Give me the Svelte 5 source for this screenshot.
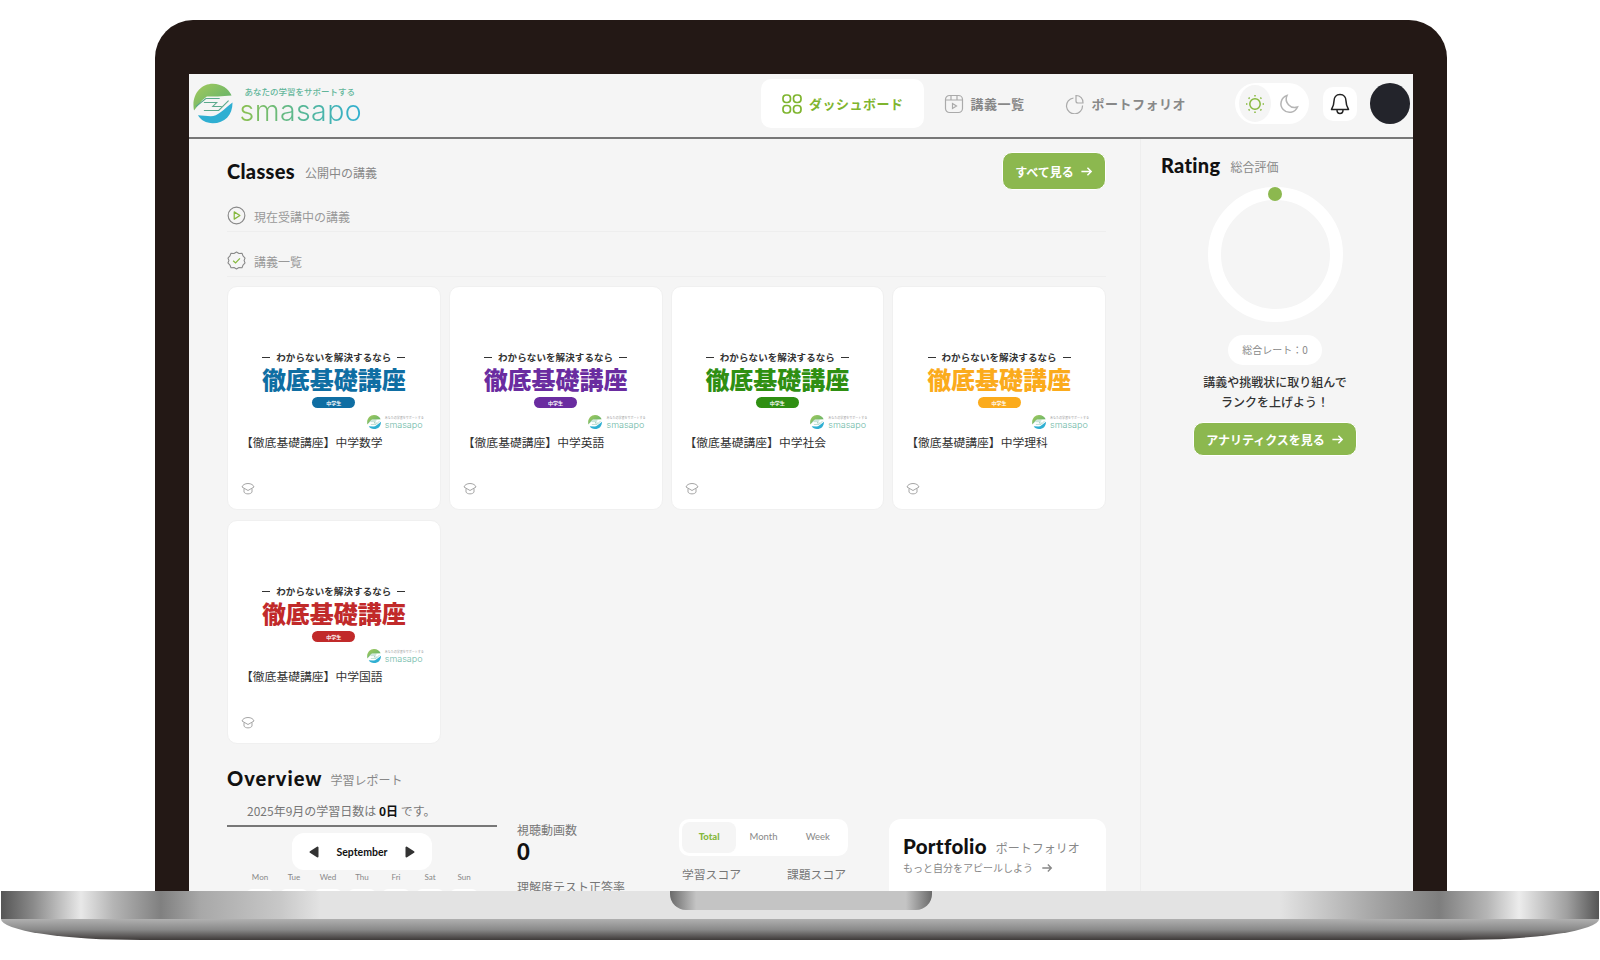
<script>
  const courses = [
    { subject: '中学数学', color: '#0f6ea3' },
    { subject: '中学英語', color: '#6a2ca0' },
    { subject: '中学社会', color: '#2f8f12' },
    { subject: '中学理科', color: '#fbab1c' },
    { subject: '中学国語', color: '#c12a2a' }
  ];
  const weekdays = ['Mon', 'Tue', 'Wed', 'Thu', 'Fri', 'Sat', 'Sun'];
</script>

{#snippet logoMark(size)}
  <svg width={size} height={size} viewBox="0 0 40 40" fill="none">
    <defs>
      <linearGradient id="leaf" x1="0" y1="0" x2="1" y2="1">
        <stop offset="0" stop-color="#a6cb5c" />
        <stop offset="1" stop-color="#55ad6e" />
      </linearGradient>
    </defs>
    <path d="M1 27C-2 11 8 0 20 0C29 0 36 5 39 12L25 13L14 13L9 17L1 27Z" fill="url(#leaf)" />
    <path d="M5 32L18 33C25 33 31 26 40 19C40 32 32 40 20 40C13 40 8 37 5 32Z" fill="#2fafd2" />
    <path d="M3 23L13 15H27M11 19H24L20 23H29M36 17L26 27H11" stroke="#5aa98c" stroke-width="1.1" />
  </svg>
{/snippet}

{#snippet arrow(size)}
  <svg width={size} height={size} viewBox="0 0 14 14" fill="none" stroke="currentColor" stroke-width="1.6">
    <path d="M1.5 7H12M8 3L12 7L8 11" />
  </svg>
{/snippet}

<div class="stage">
  <div class="bezel">
    <div class="screen">
      <header class="topbar">
        <div class="logo">
          {@render logoMark(41)}
          <div class="logo-text">
            <span class="tagline">あなたの学習をサポートする</span>
            <span class="wordmark">smasapo</span>
          </div>
        </div>

        <nav class="nav">
          <a class="nav-item active">
            <svg width="20" height="20" viewBox="0 0 20 20" fill="none" stroke="currentColor" stroke-width="1.7">
              <rect x="1" y="1" width="7.5" height="7.5" rx="3.2" />
              <rect x="11.5" y="1" width="7.5" height="7.5" rx="3.2" />
              <rect x="1" y="11.5" width="7.5" height="7.5" rx="3.2" />
              <rect x="11.5" y="11.5" width="7.5" height="7.5" rx="3.2" />
            </svg>
            ダッシュボード
          </a>
          <a class="nav-item">
            <svg width="20" height="20" viewBox="0 0 20 20" fill="none" stroke="#aaa" stroke-width="1.2">
              <rect x="1.5" y="1.5" width="17" height="17" rx="4" />
              <path d="M1.5 6H18.5M7 1.5V6M13 1.5V6" />
              <path d="M8.5 9.5L12.5 12L8.5 14.5Z" />
            </svg>
            講義一覧
          </a>
          <a class="nav-item">
            <svg width="20" height="20" viewBox="0 0 20 20" fill="none" stroke="#aaa" stroke-width="1.2">
              <path d="M8.5 4A8 8 0 1 0 17.5 11.5" />
              <path d="M11 1.5A6.8 6.8 0 0 1 18 9H13C11.8 9 11 8.2 11 7Z" />
            </svg>
            ポートフォリオ
          </a>
        </nav>

        <div class="theme-toggle">
          <span class="theme-btn on">
            <svg width="20" height="20" viewBox="0 0 20 20" fill="none" stroke="#86b83e" stroke-width="1.5">
              <circle cx="10" cy="10" r="5.2" />
              <path d="M10 1v1.4M10 17.6V19M1 10h1.4M17.6 10H19M3.6 3.6l1 1M15.4 15.4l1 1M3.6 16.4l1-1M15.4 4.6l1-1" />
            </svg>
          </span>
          <span class="theme-btn">
            <svg width="20" height="20" viewBox="0 0 20 20" fill="none" stroke="#b5b5b5" stroke-width="1.5">
              <path d="M8 1.5A8.6 8.6 0 1 0 18.5 13A8.5 8.5 0 0 1 8 1.5Z" />
            </svg>
          </span>
        </div>

        <span class="bell">
          <svg width="20" height="22" viewBox="0 0 20 22" fill="none" stroke="#222" stroke-width="1.5">
            <path d="M10 1.5C6 1.5 4 4.5 4 8C4 12 3 14 1.5 16.5H18.5C17 14 16 12 16 8C16 4.5 14 1.5 10 1.5Z" stroke-linejoin="round" />
            <path d="M7 17C7 19 8.2 20.5 10 20.5C11.8 20.5 13 19 13 17" />
          </svg>
        </span>
        <span class="avatar"></span>
      </header>

      <div class="body">
        <main class="main">
          <div class="title-row">
            <h2 class="title">Classes</h2>
            <span class="sub">公開中の講義</span>
            <button class="green-btn see-all">すべて見る {@render arrow(13)}</button>
          </div>

          <div class="section-row first">
            <svg width="19" height="19" viewBox="0 0 20 20" fill="none">
              <circle cx="10" cy="10" r="8.8" stroke="#888" stroke-width="1.2" />
              <path d="M7.6 6.2L13.6 10L7.6 13.8Z" stroke="#86b83e" stroke-width="1.3" stroke-linejoin="round" />
            </svg>
            現在受講中の講義
          </div>
          <div class="section-row">
            <svg width="19" height="19" viewBox="0 0 20 20" fill="none">
              <path d="M10 1L12.6 2.6L15.8 2.4L16.9 5.2L19 7.4L18 10L19 12.6L16.9 14.8L15.8 17.6L12.6 17.4L10 19L7.4 17.4L4.2 17.6L3.1 14.8L1 12.6L2 10L1 7.4L3.1 5.2L4.2 2.4L7.4 2.6Z" stroke="#888" stroke-width="1.1" stroke-linejoin="round" />
              <path d="M6.5 10.2L9 12.6L13.6 7.8" stroke="#86b83e" stroke-width="1.3" />
            </svg>
            講義一覧
          </div>

          <div class="cards">
            {#each courses as course}
              <article class="card">
                <div class="thumb" style="--accent: {course.color}">
                  <p class="thumb-lead"><i></i>わからないを解決するなら<i></i></p>
                  <p class="thumb-title">徹底基礎講座</p>
                  <span class="thumb-pill">中学生</span>
                  <div class="thumb-logo">
                    {@render logoMark(14)}
                    <div class="mini-text">
                      <span class="mini-tag">あなたの学習をサポートする</span>
                      <span class="mini-word">smasapo</span>
                    </div>
                  </div>
                </div>
                <p class="card-name">【徹底基礎講座】{course.subject}</p>
                <svg class="hat" width="14" height="14" viewBox="0 0 14 14" fill="none" stroke="#a5a5a5" stroke-width="1">
                  <path d="M7 1.5C10 1.5 12.5 3 13 5L7 8.5L1 5C1.5 3 4 1.5 7 1.5Z" stroke-linejoin="round" />
                  <path d="M3 6.5V10C4 12.5 10 12.5 11 10V6.5" />
                </svg>
              </article>
            {/each}
          </div>

          <div class="title-row overview-title">
            <h2 class="title wide">Overview</h2>
            <span class="sub">学習レポート</span>
          </div>

          <div class="overview">
            <section class="calendar">
              <p class="days-note">2025年9月の学習日数は <b>0日</b> です。</p>
              <div class="month-head">
                <svg width="10" height="12" viewBox="0 0 10 12"><path d="M8.5 1.5V10.5L1.5 6Z" fill="#333" stroke="#333" stroke-width="2" stroke-linejoin="round" /></svg>
                <b>September</b>
                <svg width="10" height="12" viewBox="0 0 10 12"><path d="M1.5 1.5V10.5L8.5 6Z" fill="#333" stroke="#333" stroke-width="2" stroke-linejoin="round" /></svg>
              </div>
              <div class="week">
                {#each weekdays as day}
                  <span class="day-name">{day}</span>
                {/each}
                {#each weekdays as day}
                  <span class="day-cell"></span>
                {/each}
              </div>
            </section>

            <section class="stats">
              <p class="stat-label">視聴動画数</p>
              <p class="stat-num">0</p>
              <p class="stat-label second">理解度テスト正答率</p>
            </section>

            <section class="scores">
              <div class="tabs">
                <span class="tab current">Total</span>
                <span class="tab">Month</span>
                <span class="tab">Week</span>
              </div>
              <div class="score-labels">
                <span>学習スコア</span>
                <span>課題スコア</span>
              </div>
            </section>

            <section class="portfolio">
              <div class="portfolio-title">
                <h2 class="title">Portfolio</h2>
                <span class="sub">ポートフォリオ</span>
              </div>
              <p class="portfolio-link">もっと自分をアピールしよう {@render arrow(12)}</p>
            </section>
          </div>
        </main>

        <aside class="rating">
          <div class="rating-title">
            <h2 class="title">Rating</h2>
            <span class="sub">総合評価</span>
          </div>
          <div class="ring"><span class="ring-dot"></span></div>
          <span class="rate-pill">総合レート：0</span>
          <p class="rating-copy">講義や挑戦状に取り組んで<br />ランクを上げよう！</p>
          <button class="green-btn analytics">アナリティクスを見る {@render arrow(13)}</button>
        </aside>
      </div>
    </div>
  </div>

  <div class="deck">
    <span class="notch"></span>
  </div>
  <div class="lip"></div>
</div>

<style>
  :global(body) {
    background: #fff;
  }

  .stage {
    width: 1600px;
    height: 960px;
    padding-top: 20px;
    box-sizing: border-box;
    overflow: hidden;
    font-family: "Noto Sans CJK JP", "Noto Sans", sans-serif;
    color: #777;
  }

  p,
  h2 {
    margin: 0;
  }

  .bezel {
    width: 1292px;
    height: 871px;
    margin-left: 155px;
    padding: 54px 34px 0;
    box-sizing: border-box;
    background: #231815;
    border-radius: 38px 38px 0 0;
  }

  .screen {
    height: 817px;
    background: #f5f5f5;
    overflow: hidden;
  }

  /* header */
  .topbar {
    height: 65px;
    box-sizing: border-box;
    display: flex;
    align-items: center;
    padding: 0 3px 4px 4px;
    border-bottom: 2px solid #777;
  }

  .logo {
    width: 169px;
    flex: none;
    display: flex;
    align-items: center;
    gap: 7px;
  }

  .logo-text {
    display: flex;
    flex-direction: column;
    align-items: flex-start;
    margin-top: 2px;
  }

  .tagline {
    margin-left: 5px;
    font-size: 8.5px;
    font-weight: 500;
    line-height: 11px;
    color: #62b59a;
  }

  .wordmark {
    font-family: "Inter", sans-serif;
    font-weight: 300;
    font-size: 28.5px;
    line-height: 27px;
    letter-spacing: 0.4px;
    background: linear-gradient(90deg, #8cc04f 0%, #5cb88f 45%, #2fafd2 100%);
    -webkit-background-clip: text;
    background-clip: text;
    color: transparent;
  }

  .nav {
    display: flex;
    align-items: center;
    margin-left: 399px;
  }

  .nav-item {
    height: 49px;
    display: flex;
    align-items: center;
    gap: 7px;
    padding: 0 20px;
    border-radius: 10px;
    font-size: 13px;
    font-weight: 700;
    letter-spacing: 0.5px;
    color: #888;
    white-space: nowrap;
  }

  .nav-item.active {
    padding-left: 21px;
    background: #fff;
    color: #7fb52f;
  }

  .theme-toggle {
    display: flex;
    align-items: center;
    gap: 3px;
    height: 41px;
    width: 74px;
    box-sizing: border-box;
    margin-left: 29px;
    padding: 0 4px;
    border-radius: 21px;
    background: #fff;
  }

  .theme-btn {
    width: 33px;
    height: 37px;
    display: flex;
    align-items: center;
    justify-content: center;
    border-radius: 50%;
  }

  .theme-btn.on {
    background: #f5f5f5;
  }

  .bell {
    width: 34px;
    height: 34px;
    margin-left: 14px;
    display: flex;
    align-items: center;
    justify-content: center;
    background: #fff;
    border-radius: 10px;
  }

  .avatar {
    width: 41px;
    height: 41px;
    margin-left: 13px;
    border-radius: 50%;
    background: #23242b;
  }

  /* content */
  .body {
    display: flex;
    height: 752px;
  }

  .main {
    width: 951px;
    box-sizing: border-box;
    padding: 13px 34px 0 38px;
  }

  .title-row {
    display: flex;
    align-items: center;
    gap: 10px;
    height: 38px;
  }

  .title {
    font-family: "Lato", sans-serif;
    font-size: 20px;
    font-weight: 900;
    letter-spacing: 0.3px;
    color: #111;
    line-height: 24px;
  }

  .title.wide {
    font-size: 20px;
    letter-spacing: 1px;
  }

  .sub {
    font-size: 12px;
    color: #888;
    margin-top: 3px;
  }

  .overview-title .sub {
    margin-left: -2px;
  }

  .green-btn {
    display: flex;
    align-items: center;
    justify-content: center;
    gap: 6px;
    border: 1px solid #fff;
    border-radius: 10px;
    background: #8cb84f;
    color: #fff;
    font-family: inherit;
    font-size: 12px;
    font-weight: 700;
  }

  .see-all {
    margin-left: auto;
    width: 104px;
    height: 38px;
  }

  .section-row {
    height: 45px;
    box-sizing: border-box;
    display: flex;
    align-items: flex-end;
    gap: 8px;
    padding-bottom: 6px;
    border-bottom: 1px solid #eeeeee;
    font-size: 12px;
    color: #999;
  }

  .section-row.first {
    height: 42px;
  }

  .cards {
    display: grid;
    grid-template-columns: repeat(4, 1fr);
    gap: 10px 8px;
    margin-top: 9px;
  }

  .card {
    height: 224px;
    padding: 0 13px;
    box-sizing: border-box;
    background: #fff;
    border-radius: 10px;
    border: 1px solid #f0f0f0;
    display: flex;
    flex-direction: column;
  }

  .thumb {
    height: 146px;
    padding-top: 63px;
    box-sizing: border-box;
    display: flex;
    flex-direction: column;
    align-items: center;
    color: var(--accent);
  }

  .thumb-lead {
    display: flex;
    align-items: center;
    gap: 6px;
    font-size: 9.5px;
    font-weight: 700;
    line-height: 14px;
    letter-spacing: 0.1px;
    color: #333;
  }

  .thumb-lead i {
    width: 8px;
    height: 1px;
    background: #333;
  }

  .thumb-title {
    font-size: 24px;
    font-weight: 900;
    line-height: 28px;
    margin-top: 1px;
  }

  .thumb-pill {
    width: 43px;
    height: 11px;
    margin-top: 4px;
    border-radius: 6px;
    background: var(--accent);
    color: #fff;
    font-size: 5px;
    font-weight: 700;
    line-height: 11px;
    text-align: center;
  }

  .thumb-logo {
    align-self: flex-end;
    display: flex;
    align-items: center;
    gap: 4px;
    margin-top: 7px;
    margin-right: 3px;
  }

  .mini-text {
    display: flex;
    flex-direction: column;
    line-height: 1;
  }

  .mini-tag {
    font-size: 3px;
    line-height: 4px;
    color: #9a9a9a;
  }

  .mini-word {
    font-family: "Inter", sans-serif;
    font-weight: 300;
    font-size: 9px;
    line-height: 9px;
    color: #6fb9a8;
  }

  .card-name {
    font-size: 11.8px;
    line-height: 18px;
    color: #333;
    white-space: nowrap;
  }

  .hat {
    margin-top: auto;
    margin-bottom: 13px;
  }

  .overview-title {
    height: 33px;
    box-sizing: border-box;
    padding-bottom: 4px;
    margin-top: 19px;
  }

  .overview {
    display: flex;
  }

  .calendar {
    width: 270px;
    flex: none;
  }

  .days-note {
    padding-left: 20px;
    height: 29px;
    font-size: 12px;
    line-height: 30px;
    border-bottom: 2px solid #777;
    color: #777;
  }

  .days-note b {
    color: #111;
  }

  .month-head {
    width: 140px;
    height: 37px;
    margin: 6px auto 0;
    padding: 0 17px;
    box-sizing: border-box;
    display: flex;
    align-items: center;
    justify-content: space-between;
    background: #fff;
    border-radius: 12px;
    font-family: "Lato", sans-serif;
    font-size: 10.5px;
    color: #111;
  }

  .week {
    display: grid;
    grid-template-columns: repeat(7, 34px);
    justify-content: center;
  }

  .day-name {
    height: 16px;
    font-family: "Lato", sans-serif;
    font-size: 8px;
    line-height: 14px;
    text-align: center;
    color: #888;
  }

  .day-cell {
    height: 20px;
    margin: 3px 3px 0;
    border-radius: 6px;
    background: #fff;
  }

  .stats {
    width: 142px;
    margin-left: 20px;
    padding-top: 25px;
    flex: none;
  }

  .stat-label {
    font-size: 12px;
    line-height: 18px;
    color: #777;
    white-space: nowrap;
  }

  .stat-num {
    font-family: "Lato", sans-serif;
    font-size: 22px;
    font-weight: 900;
    line-height: 26px;
    color: #111;
  }

  .stat-label.second {
    margin-top: 13px;
  }

  .scores {
    width: 169px;
    margin-left: 20px;
    padding-top: 23px;
    flex: none;
  }

  .tabs {
    height: 37px;
    box-sizing: border-box;
    padding: 3px;
    display: grid;
    grid-template-columns: repeat(3, 1fr);
    background: #fff;
    border-radius: 10px;
  }

  .tab {
    display: flex;
    align-items: center;
    justify-content: center;
    padding-bottom: 3px;
    border-radius: 8px;
    font-family: "Lato", sans-serif;
    font-size: 9.5px;
    color: #888;
  }

  .tab.current {
    background: #f5f5f5;
    color: #86b83e;
    font-weight: 900;
  }

  .score-labels {
    display: flex;
    justify-content: space-between;
    padding: 9px 2px 0 3px;
    font-size: 11.8px;
    line-height: 18px;
    color: #777;
  }

  .portfolio {
    width: 217px;
    height: 100px;
    margin: 23px 0 0 41px;
    padding: 14px 14px 0;
    box-sizing: border-box;
    flex: none;
    background: #fff;
    border-radius: 12px;
  }

  .portfolio-title {
    display: flex;
    align-items: center;
    gap: 9px;
    height: 26px;
  }

  .portfolio-title .title {
    font-size: 20.5px;
  }

  .portfolio-link {
    display: flex;
    align-items: center;
    gap: 8px;
    margin-top: 1px;
    font-size: 10px;
    line-height: 16px;
    color: #888;
  }

  /* rating side */
  .rating {
    flex: 1;
    padding-right: 4px;
    display: flex;
    flex-direction: column;
    align-items: center;
    border-left: 1px solid #eeeeee;
  }

  .rating-title {
    align-self: flex-start;
    display: flex;
    align-items: center;
    gap: 10px;
    margin: 13px 0 0 20px;
    height: 26px;
  }

  .ring {
    position: relative;
    width: 135px;
    height: 135px;
    margin-top: 9px;
    box-sizing: border-box;
    border: 13px solid #fff;
    border-radius: 50%;
  }

  .ring-dot {
    position: absolute;
    top: -13px;
    left: 50%;
    width: 14px;
    height: 14px;
    margin-left: -7px;
    border-radius: 50%;
    background: #8cb84f;
  }

  .rate-pill {
    height: 30px;
    width: 94px;
    margin-top: 13px;
    border-radius: 15px;
    background: #fff;
    font-size: 10px;
    line-height: 30px;
    text-align: center;
    color: #888;
  }

  .rating-copy {
    margin-top: 7px;
    font-size: 12px;
    font-weight: 500;
    line-height: 20px;
    text-align: center;
    color: #333;
  }

  .analytics {
    width: 164px;
    height: 34px;
    margin-top: 10px;
  }

  /* laptop base */
  .deck {
    position: relative;
    height: 28px;
    margin: 0 1px;
    background: linear-gradient(
      90deg,
      #555 0,
      #8a8a8a 2%,
      #e8e8e8 5%,
      #b5b5b5 7%,
      #808080 10%,
      #a8a8a8 12.5%,
      #c8c8c8 17.5%,
      #e3e3e3 20%,
      #e3e3e3 80%,
      #c4c4c4 83%,
      #a5a5a5 86%,
      #7e7e7e 90%,
      #b5b5b5 93%,
      #ececec 95%,
      #a0a0a0 98%,
      #555 100%
    );
  }

  .notch {
    position: absolute;
    left: 669px;
    top: 0;
    width: 262px;
    height: 19px;
    border-radius: 0 0 16px 16px;
    background: linear-gradient(90deg, #6a6a6a 0, #c4c4c4 10%, #c4c4c4 90%, #6a6a6a 100%);
  }

  .lip {
    height: 21px;
    margin: 0 1px;
    border-radius: 0 0 140px 140px / 0 0 21px 21px;
    background: linear-gradient(180deg, #b0b0b0 0, #8a8a8a 50%, #3e3a39 100%);
  }
</style>
